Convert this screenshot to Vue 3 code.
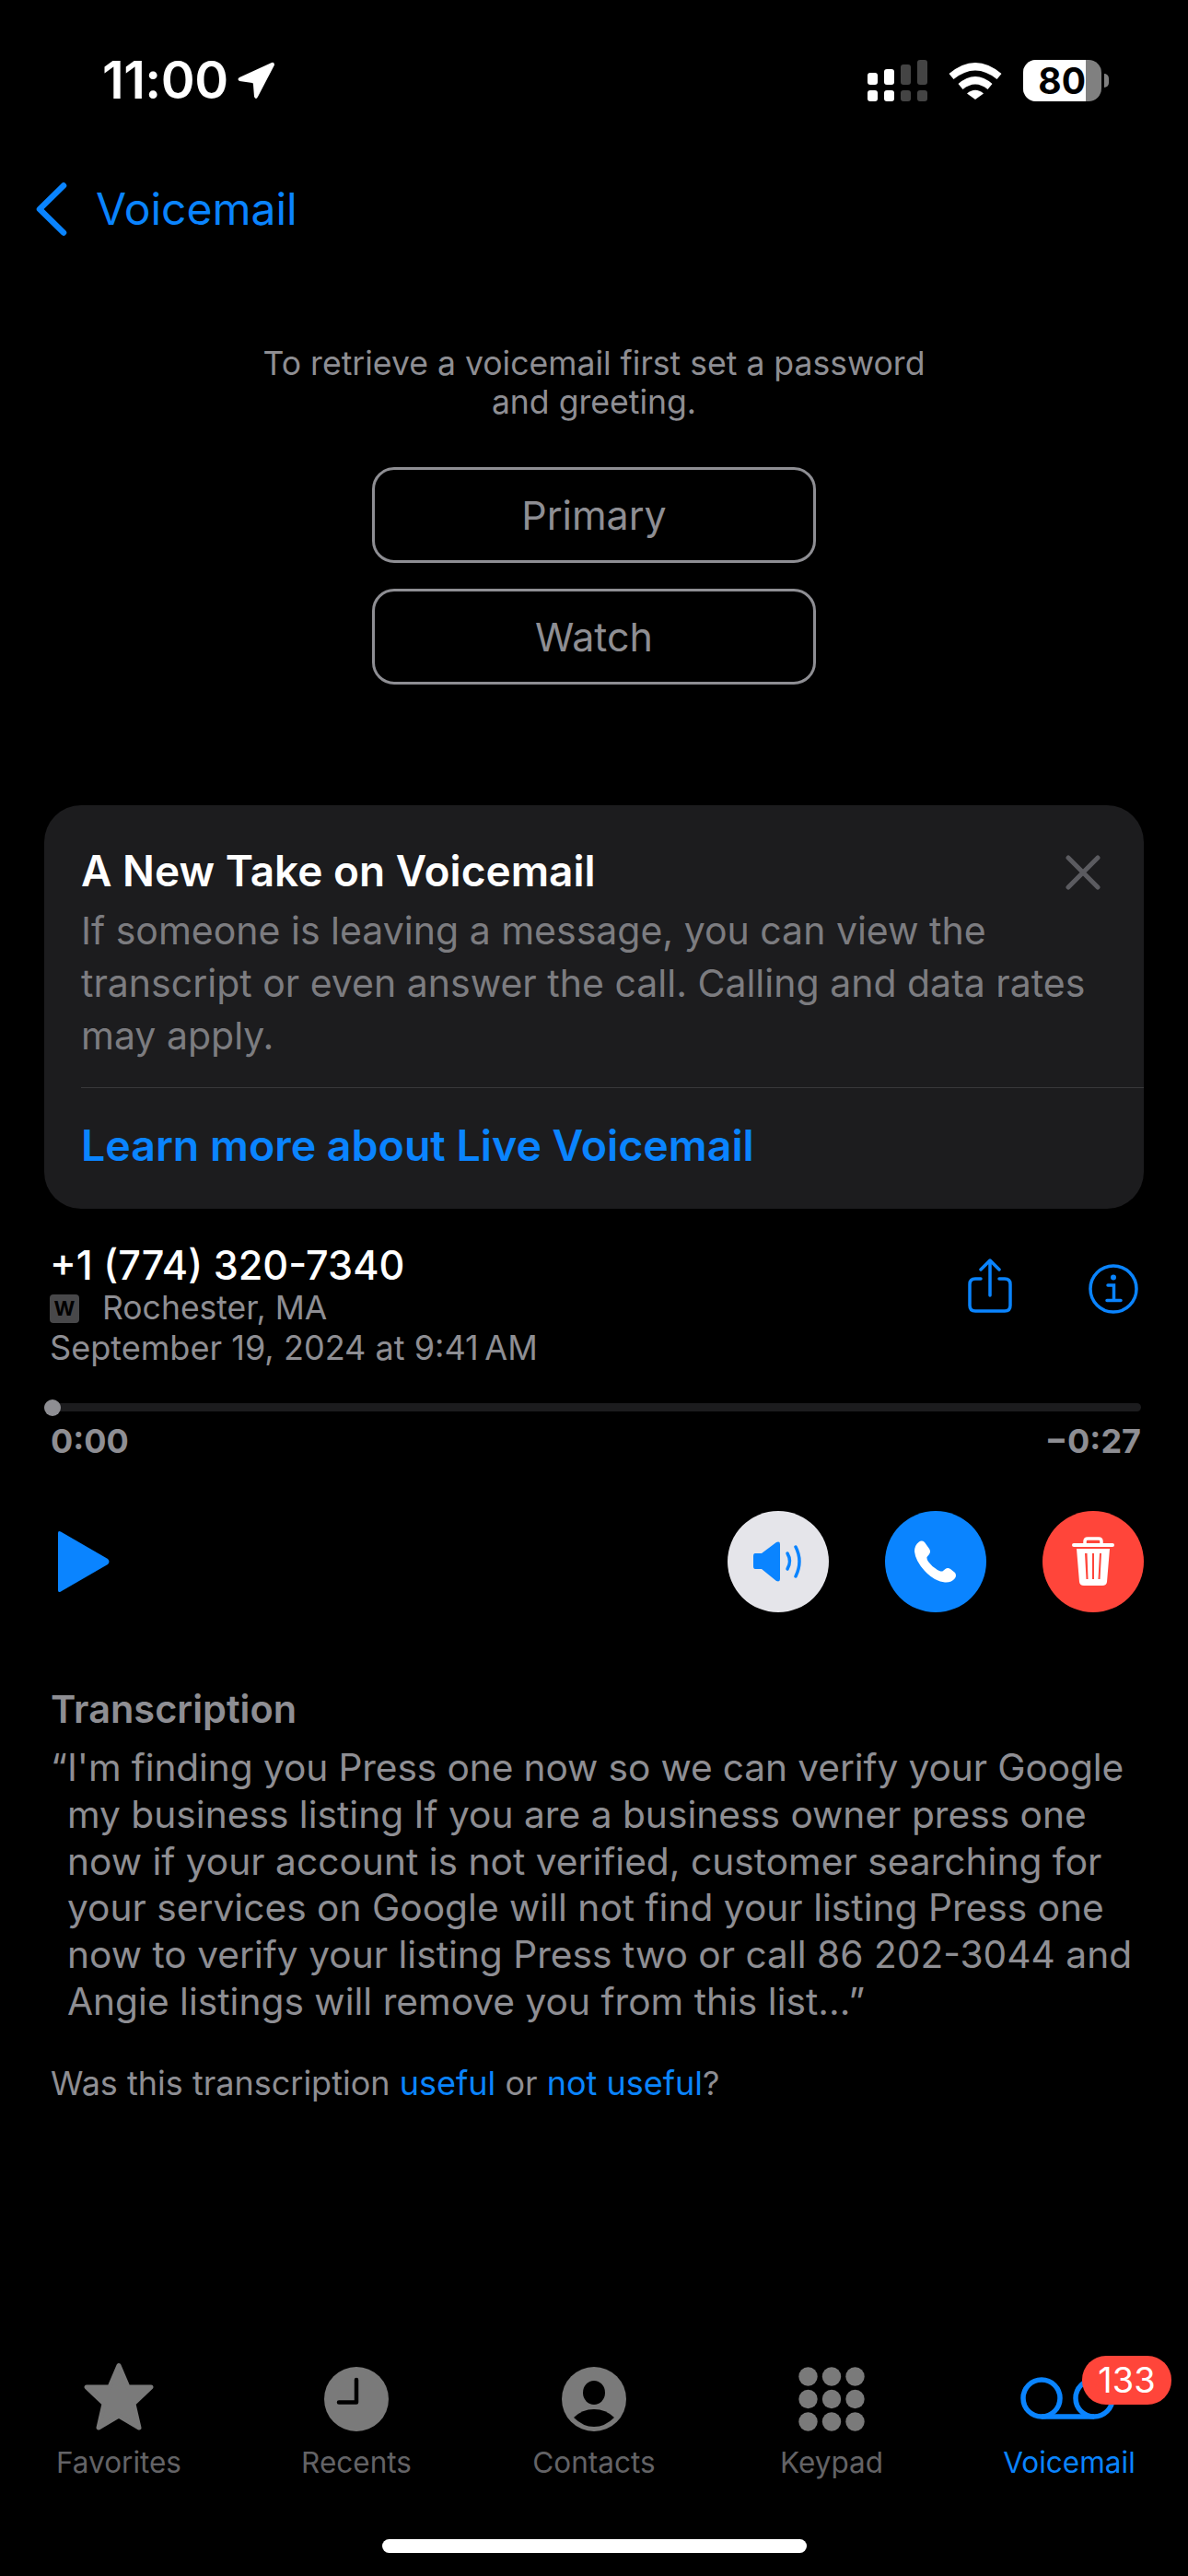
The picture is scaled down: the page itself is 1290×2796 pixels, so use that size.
<script setup>
const transcript = [
  'my business listing If you are a business owner press one',
  'now if your account is not verified, customer searching for',
  'your services on Google will not find your listing Press one',
  'now to verify your listing Press two or call 86 202-3044 and',
  'Angie listings will remove you from this list...”',
]
const keypadDots = []
for (let row = 0; row < 3; row++) {
  for (let col = 0; col < 3; col++) {
    keypadDots.push({ cx: 24.5 + col * 25.5, cy: 18.5 + row * 24.5 })
  }
}
</script>

<template>
  <div class="page">
    <div class="status">
      <div class="time">11:00</div>
      <svg class="arrow" width="42" height="42" viewBox="0 0 42 42">
        <path d="M38 2 L3 18 Q0 20 3 22 L17 24 Q18 24 18 26 L19 39 Q21 43 23 39 L41 4.500 Q41 1 38 2Z" fill="#fff" />
      </svg>
      <div class="status-right">
        <svg width="65" height="45" viewBox="0 0 65 45">
          <rect x="0" y="14" width="11" height="13" rx="3" fill="#fff" />
          <rect x="18" y="10" width="11" height="17" rx="3" fill="#fff" />
          <rect x="36" y="5" width="11" height="22" rx="3" fill="#444" />
          <rect x="54" y="0" width="11" height="27" rx="3" fill="#444" />
          <rect x="0" y="33" width="11" height="12" rx="3" fill="#fff" />
          <rect x="18" y="33" width="11" height="12" rx="3" fill="#fff" />
          <rect x="36" y="33" width="11" height="12" rx="3" fill="#444" />
          <rect x="54" y="33" width="11" height="12" rx="3" fill="#444" />
        </svg>
        <svg class="wifi" width="58" height="42" viewBox="0 0 58 42">
          <path d="M0.500 14 Q29 -10 57.500 14 L52.500 20 Q29 1 5.500 20Z" fill="#fff" />
          <path d="M10.500 25 Q29 9 47.500 25 L42.500 31 Q29 20 15.500 31Z" fill="#fff" />
          <path d="M20 35.500 Q29 28 38 35.500 L29 42Z" fill="#fff" />
        </svg>
        <div class="battery">
          <div class="battery-fill">80</div>
        </div>
        <div class="battery-tip"></div>
      </div>
    </div>

    <div class="nav">
      <svg width="34" height="58" viewBox="0 0 34 58">
        <path d="M30 3.500 L4 29 L30 54.500" fill="none" stroke="#0a84ff" stroke-width="6.500" stroke-linecap="round" stroke-linejoin="round" />
      </svg>
      <span class="nav-label">Voicemail</span>
    </div>

    <p class="hint">To retrieve a voicemail first set a password<br />and greeting.</p>
    <div class="setup">
      <div class="setup-btn">Primary</div>
      <div class="setup-btn">Watch</div>
    </div>

    <div class="card">
      <svg class="card-close" width="38" height="38" viewBox="0 0 38 38">
        <path d="M3 3 L35 35 M35 3 L3 35" stroke="#5b5b60" stroke-width="5" stroke-linecap="round" />
      </svg>
      <h2 class="card-title">A New Take on Voicemail</h2>
      <p class="card-body">If someone is leaving a message, you can view the<br />transcript or even answer the call. Calling and data rates<br />may apply.</p>
      <div class="card-link">Learn more about Live Voicemail</div>
    </div>

    <div class="details">
      <div class="caller">
        <div class="phone">+1 (774) 320-7340</div>
        <div class="location"><span class="w-badge">W</span>Rochester, MA</div>
        <div class="date">September 19, 2024 at 9:41&#8239;AM</div>
      </div>
      <div class="caller-actions">
        <svg width="48" height="60" viewBox="0 0 48 60">
          <path d="M14 22 H8 Q2 22 2 28 V51 Q2 57 8 57 H40 Q46 57 46 51 V28 Q46 22 40 22 H34" fill="none" stroke="#0a84ff" stroke-width="3.500" stroke-linecap="round" />
          <path d="M24 40 V3 M14 12 L24 2 L34 12" fill="none" stroke="#0a84ff" stroke-width="3.500" stroke-linecap="round" stroke-linejoin="round" />
        </svg>
        <svg class="info" width="54" height="54" viewBox="0 0 54 54">
          <circle cx="27" cy="27" r="25" fill="none" stroke="#0a84ff" stroke-width="3.500" />
          <circle cx="27" cy="14.500" r="3" fill="#0a84ff" />
          <path d="M21 23 H27.500 V39 M20 39.500 H35" fill="none" stroke="#0a84ff" stroke-width="3.500" stroke-linecap="round" />
        </svg>
      </div>
    </div>

    <div class="scrub">
      <div class="track"><span class="knob"></span></div>
      <div class="times"><span>0:00</span><span>−0:27</span></div>
    </div>

    <div class="controls">
      <svg class="play" width="60" height="68" viewBox="0 0 60 68">
        <path d="M3 3 Q3 0 6 1.500 L57 31 Q60 34 57 37 L6 66.500 Q3 68 3 65Z" fill="#0a84ff" />
      </svg>
      <div class="round-btns">
        <div class="round-btn speaker">
          <svg width="54" height="44" viewBox="0 0 54 44">
            <path d="M2 13 H9 L25 1 Q29 -0.500 29 3 V41 Q29 44.500 25 43 L9 30 H2 Q0 30 0 27 V16 Q0 13 2 13Z" fill="#0a84ff" />
            <path d="M37 13 Q42 21.500 37 30" fill="none" stroke="#0a84ff" stroke-width="3.500" stroke-linecap="round" />
            <path d="M46 6 Q54 21.500 46 38" fill="none" stroke="#0a84ff" stroke-width="3.500" stroke-linecap="round" />
          </svg>
        </div>
        <div class="round-btn call">
          <svg width="46" height="46" viewBox="0 0 46 46">
            <path d="M5 1.500 Q8 -0.500 11 2 L16 9 Q18 12 16 15 L13.500 18 Q13 20 15 23 Q20 30 27 33 Q30 34 31 33 L33.500 31 Q36 29 39 31 L44 35 Q46 38 44 41 Q40 46 33 45.500 Q21 44 11 33 Q1 22 0 12 Q0 5 5 1.500Z" fill="#fff" />
          </svg>
        </div>
        <div class="round-btn trash">
          <svg width="46" height="54" viewBox="0 0 46 54">
            <path d="M14 7 V5 Q14 2 17 2 H29 Q32 2 32 5 V7" fill="none" stroke="#fff" stroke-width="3.500" />
            <rect x="0" y="7" width="46" height="4" rx="2" fill="#fff" />
            <path fill-rule="evenodd" d="M5 13 H41 L38 49 Q37.500 53 33 53 H13 Q8.500 53 8 49Z M14 18 L15.500 46 H17.500 L16.500 18Z M22 18 V46 H24 V18Z M30 18 L28.500 46 H30.500 L32 18Z" fill="#fff" />
          </svg>
        </div>
      </div>
    </div>

    <div class="transcription">
      <h3>Transcription</h3>
      <p class="first"><span class="quote">“</span>I'm finding you Press one now so we can verify your Google</p>
      <p v-for="(line, i) in transcript" :key="i">{{ line }}</p>
      <div class="useful">Was this transcription <span class="blue">useful</span> or <span class="blue">not useful</span>?</div>
    </div>

    <div class="tabbar">
      <div class="tab">
        <svg width="100" height="80" viewBox="0 0 100 80">
          <path d="M50 6.500 L60 30 L85 30 L66 48 L72 74 L50 61 L28 74 L34 48 L15 30 L40 30Z" fill="#7a7a7a" stroke="#7a7a7a" stroke-width="5" stroke-linejoin="round" />
        </svg>
        <span>Favorites</span>
      </div>
      <div class="tab">
        <svg width="100" height="80" viewBox="0 0 100 80">
          <circle cx="50" cy="43" r="35" fill="#7a7a7a" />
          <path d="M50 22 V46.500 H31" fill="none" stroke="#000" stroke-width="4.500" stroke-linecap="round" stroke-linejoin="round" />
        </svg>
        <span>Recents</span>
      </div>
      <div class="tab">
        <svg width="100" height="80" viewBox="0 0 100 80">
          <circle cx="50" cy="43" r="35" fill="#7a7a7a" />
          <ellipse cx="50" cy="36" rx="12" ry="13" fill="#000" />
          <path d="M28 63 Q37 54 50 54 Q63 54 72 63 Q62 73 50 73 Q38 73 28 63Z" fill="#000" />
        </svg>
        <span>Contacts</span>
      </div>
      <div class="tab">
        <svg width="100" height="80" viewBox="0 0 100 80">
          <circle v-for="(d, i) in keypadDots" :key="i" :cx="d.cx" :cy="d.cy" r="10.200" fill="#7a7a7a" />
        </svg>
        <span>Keypad</span>
      </div>
      <div class="tab active">
        <svg width="110" height="80" viewBox="0 0 110 80">
          <path d="M25 62 H82" fill="none" stroke="#0a84ff" stroke-width="5.500" />
          <circle cx="25" cy="42" r="20" fill="none" stroke="#0a84ff" stroke-width="5.500" />
          <circle cx="82" cy="42" r="20" fill="none" stroke="#0a84ff" stroke-width="5.500" />
        </svg>
        <span>Voicemail</span>
        <div class="badge">133</div>
      </div>
    </div>

    <div class="home-bar"></div>
  </div>
</template>

<style scoped>
.page {
  width: 1290px;
  height: 2796px;
  background: #000;
  display: flex;
  flex-direction: column;
  font-family: Inter, "Liberation Sans", sans-serif;
  color: #8e8e93;
  overflow: hidden;
}

.status {
  height: 174px;
  display: flex;
  align-items: center;
  padding-left: 111px;
}
.time {
  color: #fff;
  font-size: 56px;
  font-weight: 600;
  letter-spacing: -0.500px;
  width: 146px;
}
.status-right {
  margin-left: auto;
  display: flex;
  align-items: center;
  margin-right: 86px;
}
.wifi {
  margin-left: 23px;
}
.battery {
  margin-left: 23px;
  width: 85px;
  height: 45px;
  border-radius: 14px;
  background: #808080;
  overflow: hidden;
}
.battery-fill {
  width: 68px;
  height: 45px;
  background: #fff;
  color: #000;
  font-size: 39px;
  font-weight: 700;
  line-height: 45px;
  text-align: right;
}
.battery-tip {
  width: 5px;
  height: 15px;
  margin-left: 3px;
  background: #808080;
  border-radius: 0 8px 8px 0;
}

.nav {
  height: 106px;
  display: flex;
  align-items: center;
  padding-left: 39px;
  color: #0a84ff;
}
.nav-label {
  margin: 0 0 2px 31px;
  font-size: 48px;
}

.hint {
  margin: 94px 0 0;
  text-align: center;
  font-size: 35.600px;
  line-height: 42px;
}
.setup {
  margin-top: 49px;
  display: flex;
  flex-direction: column;
  align-items: center;
  gap: 28px;
}
.setup-btn {
  width: 482px;
  height: 104px;
  box-sizing: border-box;
  border: 3px solid #8e8e93;
  border-radius: 24px;
  display: flex;
  align-items: center;
  justify-content: center;
  font-size: 43px;
}

.card {
  margin: 131px 48px 0;
  height: 438px;
  box-sizing: border-box;
  background: #1c1c1e;
  border-radius: 40px;
  padding: 46px 0 0 40px;
  position: relative;
}
.card-close {
  position: absolute;
  top: 54px;
  right: 47px;
}
.card-title {
  margin: 0;
  color: #fff;
  font-size: 46px;
  font-weight: 600;
  line-height: 50px;
}
.card-body {
  margin: 12px 0 0;
  color: #7c7c80;
  font-size: 41px;
  line-height: 57px;
}
.card-link {
  margin-top: 27px;
  border-top: 1px solid #38383a;
  padding-top: 34px;
  color: #0a84ff;
  font-size: 46.500px;
  font-weight: 600;
  line-height: 56px;
}

.details {
  margin-top: 36px;
  padding: 0 54px 0 54px;
  display: flex;
  justify-content: space-between;
}
.phone {
  color: #fff;
  font-size: 43.200px;
  font-weight: 500;
  line-height: 50px;
}
.location {
  font-size: 35.500px;
  line-height: 44px;
  display: flex;
  align-items: center;
}
.w-badge {
  width: 32px;
  height: 31px;
  margin-right: 25px;
  border-radius: 4px;
  background: #48484a;
  color: #000;
  font-size: 22px;
  font-weight: 700;
  line-height: 31px;
  text-align: center;
}
.date {
  font-size: 36.100px;
  line-height: 42px;
}
.caller-actions {
  display: flex;
  align-items: flex-start;
  gap: 83px;
  padding-top: 18px;
}
.info {
  margin-top: 6px;
}

.scrub {
  margin: 39px 51px 0 48px;
}
.track {
  height: 9px;
  background: #1c1c1e;
  border-radius: 5px;
  position: relative;
}
.knob {
  position: absolute;
  left: 0;
  top: -4px;
  width: 18px;
  height: 18px;
  border-radius: 50%;
  background: #8e8e93;
}
.times {
  margin-top: 10px;
  padding-left: 7px;
  display: flex;
  justify-content: space-between;
  font-size: 36px;
  font-weight: 700;
  line-height: 44px;
  color: #8e8e93;
}

.controls {
  margin-top: 54px;
  padding: 0 48px 0 60px;
  display: flex;
  align-items: center;
  justify-content: space-between;
}
.round-btns {
  display: flex;
  gap: 61px;
}
.round-btn {
  width: 110px;
  height: 110px;
  border-radius: 50%;
  display: flex;
  align-items: center;
  justify-content: center;
}
.speaker {
  background: #e5e5ea;
}
.call {
  background: #0a84ff;
}
.trash {
  background: #ff453a;
}

.transcription {
  margin-top: 80px;
  padding-left: 55px;
}
.transcription h3 {
  margin: 0 0 14px;
  font-size: 41.500px;
  font-weight: 600;
  line-height: 50px;
}
.transcription p {
  margin: 0 0 0 18px;
  font-size: 40.700px;
  line-height: 50.800px;
  white-space: nowrap;
}
.transcription p.first {
  margin-left: 0;
  letter-spacing: -0.120px;
}
.quote {
  display: inline-block;
  width: 18px;
}
.useful {
  margin-top: 40px;
  font-size: 36px;
  line-height: 44px;
}
.blue {
  color: #0a84ff;
}

.tabbar {
  margin-top: auto;
  display: grid;
  grid-template-columns: repeat(5, 1fr);
}
.tab {
  display: flex;
  flex-direction: column;
  align-items: center;
  position: relative;
  font-size: 31.500px;
  line-height: 36px;
  color: #636366;
}
.tab span {
  margin-top: 14px;
}
.tab.active {
  color: #0a84ff;
}
.badge {
  position: absolute;
  top: -4px;
  left: 143px;
  width: 97px;
  height: 53px;
  border-radius: 26px;
  background: #ff453a;
  color: #fff;
  font-size: 38px;
  line-height: 53px;
  text-align: center;
}
.home-bar {
  margin: 65px auto 25px;
  width: 461px;
  height: 15px;
  background: #fff;
  border-radius: 8px;
}
</style>
